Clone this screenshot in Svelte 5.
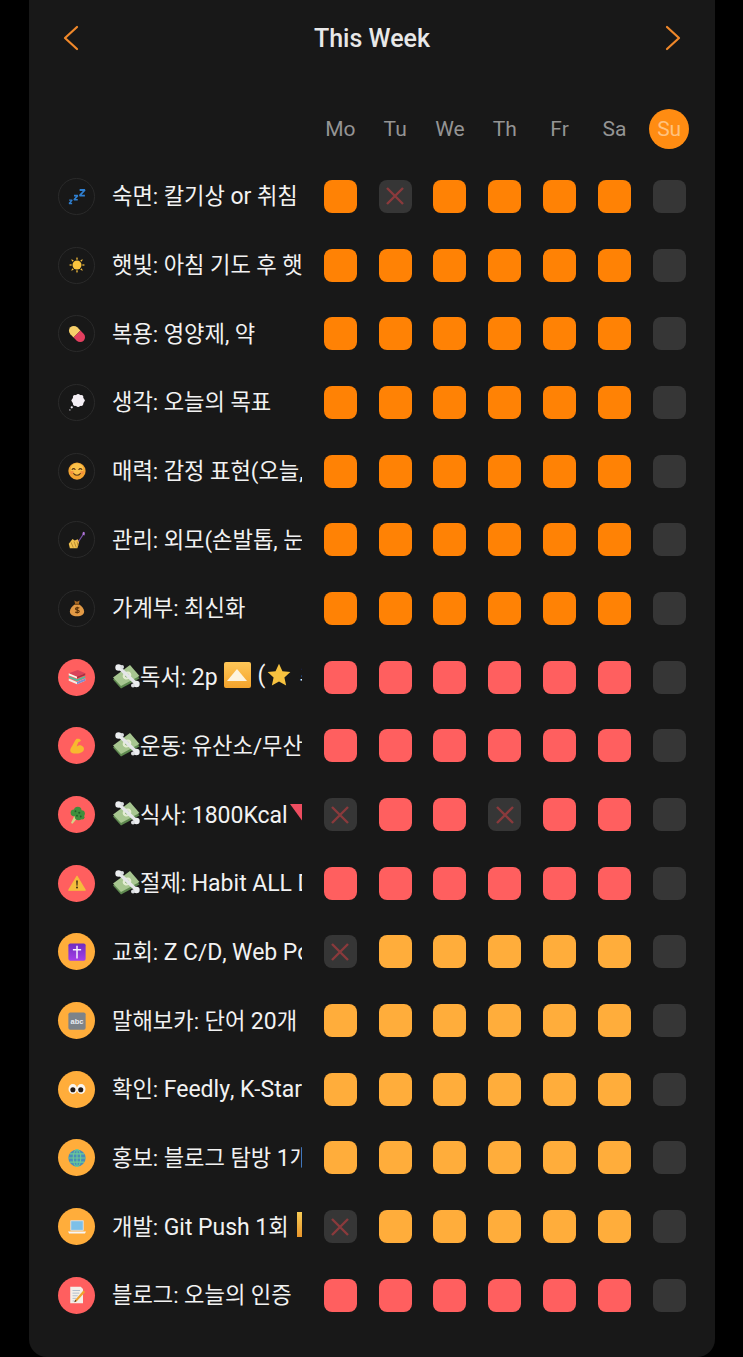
<script>
  const O = 'orange', R = 'red', A = 'amber';
  const days = ['Mo', 'Tu', 'We', 'Th', 'Fr', 'Sa', 'Su'];
  const habits = [
    { icon: 'zzz', text: '숙면: 칼기상 or 취침', tone: O, missed: [1] },
    { icon: 'sun', text: '햇빛: 아침 기도 후 햇빛', tone: O, missed: [] },
    { icon: 'pill', text: '복용: 영양제, 약', tone: O, missed: [] },
    { icon: 'cloud', text: '생각: 오늘의 목표', tone: O, missed: [] },
    { icon: 'smile', text: '매력: 감정 표현(오늘, 감사)', tone: O, missed: [] },
    { icon: 'nails', text: '관리: 외모(손발톱, 눈썹)', tone: O, missed: [] },
    { icon: 'bag', text: '가계부: 최신화', tone: O, missed: [] },
    { icon: 'books', money: true, text: '독서: 2p', after: 'book', tone: R, missed: [] },
    { icon: 'muscle', money: true, text: '운동: 유산소/무산소', tone: R, missed: [] },
    { icon: 'broccoli', money: true, text: '식사: 1800Kcal', after: 'down', tone: R, missed: [0, 3] },
    { icon: 'warn', money: true, text: '절제: Habit ALL Day', tone: R, missed: [] },
    { icon: 'cross', text: '교회: Z C/D, Web Post', tone: A, missed: [0] },
    { icon: 'abc', text: '말해보카: 단어 20개', tone: A, missed: [] },
    { icon: 'eyes', text: '확인: Feedly, K-Star News', tone: A, missed: [] },
    { icon: 'globe', text: '홍보: 블로그 탐방 1개', tone: A, missed: [] },
    { icon: 'laptop', text: '개발: Git Push 1회', after: 'bar', tone: A, missed: [0] },
    { icon: 'memo', text: '블로그: 오늘의 인증', tone: R, missed: [] }
  ];
  // Latin letters and digits run slightly larger than the Hangul beside them.
  const runs = (s) => s.split(/([A-Za-z0-9]+)/);
</script>

{#snippet emoji(name)}
  <svg class="emoji" viewBox="0 0 24 24" aria-hidden="true">
    {#if name === 'zzz'}
      <g fill="none" stroke="#2f7fd0" stroke-linejoin="bevel">
        <path d="M1.500 17.500h4l-4 4.500h4" stroke-width="1.900" />
        <path d="M8 11.500h5l-5 5.500h5" stroke-width="2.100" />
        <path d="M15.500 4h7l-7 7.500h7" stroke-width="2.400" />
      </g>
    {:else if name === 'sun'}
      <g fill="#f0b93c">
        <path d="M12 1l1.400 3.600h-2.800zM12 23l-1.400-3.600h2.800zM1 12l3.600-1.400v2.800zM23 12l-3.600 1.400v-2.800zM4.200 4.200l3.500 1.500-2 2zM19.800 19.800l-3.500-1.500 2-2zM19.800 4.200l-1.500 3.500-2-2zM4.200 19.800l1.500-3.500 2 2z" />
      </g>
      <circle cx="12" cy="12" r="6" fill="#fbc53e" />
    {:else if name === 'pill'}
      <g transform="rotate(45 12 12)">
        <path d="M12 5.500h-6a6.500 6.500 0 0 0 0 13h6z" fill="#f7cf6a" />
        <path d="M12 5.500h6a6.500 6.500 0 0 1 0 13h-6z" fill="#e33f5f" />
      </g>
    {:else if name === 'cloud'}
      <g fill="#f4eff5">
        <circle cx="13.500" cy="10" r="8" />
        <circle cx="13.500" cy="3.800" r="2.400" />
        <circle cx="18" cy="5.200" r="2.400" />
        <circle cx="20" cy="10" r="2.400" />
        <circle cx="18" cy="14.800" r="2.400" />
        <circle cx="13.500" cy="16.200" r="2.400" />
        <circle cx="9" cy="14.800" r="2.400" />
        <circle cx="7" cy="10" r="2.400" />
        <circle cx="9" cy="5.200" r="2.400" />
      </g>
      <circle cx="5" cy="19" r="1.500" fill="#e6e1ea" />
      <circle cx="2.500" cy="22.500" r="0.900" fill="#e6e1ea" />
    {:else if name === 'smile'}
      <circle cx="12" cy="12" r="11.500" fill="#f4a431" />
      <circle cx="12" cy="10" r="8.500" fill="#fbc84f" opacity=".85" />
      <circle cx="5.500" cy="14" r="2.400" fill="#f0803c" opacity=".7" />
      <circle cx="18.500" cy="14" r="2.400" fill="#f0803c" opacity=".7" />
      <g fill="none" stroke="#5a3410" stroke-width="1.400" stroke-linecap="round">
        <path d="M5.500 10c1-1.600 3-1.600 4 0M14.500 10c1-1.600 3-1.600 4 0M7.500 15.500c2.400 3 6.600 3 9 0" />
      </g>
    {:else if name === 'nails'}
      <path d="M1 17l5-6.500 3 2 4-1.500 2 3-2.500 9h-10z" fill="#f2c14e" />
      <path d="M4 15l3 7M8 14l3 8M12 14l1.500 6" stroke="#a87a2a" stroke-width="1" />
      <path d="M14 14L20 5" stroke="#7a4fa8" stroke-width="1.600" />
      <path d="M19 4.500l1-3.500 2.500 1-.5 4z" fill="#b276dc" />
    {:else if name === 'bag'}
      <path d="M8.500 2l3.500 1.500L15.500 2 14.500 7h-5z" fill="#a96a25" />
      <path d="M9.500 7h5c4 2.500 7 6 7 9.500 0 4-3.500 6.500-9.500 6.500S2.500 20.500 2.500 16.500C2.500 13 5.500 9.500 9.500 7z" fill="#e39a45" />
      <rect x="9" y="6.200" width="6" height="1.600" rx=".8" fill="#6e4012" />
      <path d="M15 12.200c-.8-1-4.800-1.200-5 .8-.2 2.400 5.200 1.200 5 3.600-.2 2-4.400 1.800-5.400.6M12.300 10.200v9" fill="none" stroke="#5b3208" stroke-width="1.500" />
    {:else if name === 'books'}
      <path d="M1 7L13 2.500l10 4.500-11 4.500z" fill="#d8435a" />
      <path d="M1 7l11 4.500v2.500L1 9.500z" fill="#fbf6ec" />
      <path d="M12 11.500l11-4.500v2.500L12 14z" fill="#a92f42" />
      <path d="M1 10.500l11 4.500 11-4.500v2.500l-11 4.500L1 13z" fill="#4fbd9c" />
      <path d="M1 14l11 4.500 11-4.500v3l-11 4.500L1 17z" fill="#f2efe6" />
      <path d="M12 18.500l11-4.500v3l-11 4.500z" fill="#7d8ccc" />
    {:else if name === 'muscle'}
      <path d="M11 2.500c2-.8 5 0 6 1.500.5 1.500-1 2.500-3 2.500-1 2-2 4-2.300 6.500 1.500-1.800 4-2.500 6.500-1.500 2.500 1 3.800 3.500 2.800 6-1.300 3-6 4.500-11 4.500-3.500 0-6.500-1-7-3.500-.3-2 1-4 2.500-6.500C7 9.500 8.500 5.500 11 2.500z" fill="#f7b92f" />
    {:else if name === 'broccoli'}
      <path d="M4 22.500l4.500-9.500 3.500 3.500-6 7z" fill="#d6d488" />
      <g fill="#3f8f3d">
        <circle cx="8" cy="9" r="4.500" /><circle cx="13" cy="6" r="5" /><circle cx="18" cy="10" r="4.500" /><circle cx="14" cy="14" r="5" /><circle cx="19" cy="15" r="3" />
      </g>
      <g fill="#1f5c27"><circle cx="10" cy="7" r="1.200" /><circle cx="15" cy="9" r="1.400" /><circle cx="12" cy="13" r="1.200" /><circle cx="17" cy="14" r="1.200" /></g>
    {:else if name === 'warn'}
      <path d="M12 3L23 21.500H1z" fill="#f5bd3c" stroke="#f5bd3c" stroke-width="1.500" stroke-linejoin="round" />
      <path d="M11 8.500h2l-.4 7h-1.200z" fill="#2c2010" />
      <circle cx="12" cy="18" r="1.200" fill="#2c2010" />
    {:else if name === 'cross'}
      <defs>
        <linearGradient id="purple" x1="0" y1="0" x2="0" y2="1">
          <stop offset="0" stop-color="#6d2cc0" />
          <stop offset="1" stop-color="#a63fe8" />
        </linearGradient>
      </defs>
      <rect x="0.500" y="0.500" width="23" height="23" rx="2.500" fill="url(#purple)" />
      <path d="M12 3.500v17M6.500 9h11" stroke="#f8f0fd" stroke-width="2" />
    {:else if name === 'abc'}
      <rect x="0.500" y="0.500" width="23" height="23" rx="2.500" fill="#7d8389" />
      <text x="12" y="15.500" text-anchor="middle" class="abc">abc</text>
    {:else if name === 'eyes'}
      <ellipse cx="6.500" cy="12" rx="5.800" ry="6.800" fill="#f8f5f0" />
      <ellipse cx="17.500" cy="12" rx="5.800" ry="6.800" fill="#f8f5f0" />
      <circle cx="6.500" cy="13" r="3.400" fill="#231a16" />
      <circle cx="17" cy="13" r="3.400" fill="#231a16" />
    {:else if name === 'globe'}
      <circle cx="12" cy="12" r="11.500" fill="#4a8db8" />
      <g fill="none" stroke="#6ccb96" stroke-width="1.400">
        <ellipse cx="12" cy="12" rx="5" ry="11.500" /><path d="M12 .5v23M.5 12h23M2.500 6.500h19M2.500 17.500h19" />
      </g>
    {:else if name === 'laptop'}
      <rect x="3" y="3" width="18" height="14" rx="1" fill="#d9e0e6" />
      <rect x="4.300" y="4.300" width="15.400" height="11.500" fill="#7cc0e8" />
      <path d="M0 18h24l-1.500 2.500h-21z" fill="#f6f6f7" />
    {:else if name === 'memo'}
      <path d="M3 1h14l3 3v19H3z" fill="#f4efe8" />
      <path d="M6 6h10M6 9.500h9M6 13h7M6 16.500h5M6 20h3" stroke="#9fb0c6" stroke-width="1" />
      <path d="M20.500 6l2.500 2L12 20l-3.500 1.500L10 18z" fill="#f0a32f" />
      <path d="M9.500 18.500l2 1.500-3 1.500z" fill="#3c2a18" />
    {/if}
  </svg>
{/snippet}

{#snippet money()}
  <svg class="money" viewBox="0 0 28 25" aria-hidden="true">
    <path d="M1 15.500l8 9L27.500 14.500 18 3z" fill="#5f8a50" />
    <path d="M1 13.500l8 8.500L27.500 12 18 1z" fill="#a7c690" />
    <ellipse cx="15" cy="11.500" rx="4.500" ry="3.800" transform="rotate(-30 15 11.500)" fill="#e4edd2" />
    <circle cx="15" cy="11.500" r="1.900" fill="#5f9350" />
    <path d="M7 3.500L24 19.500" stroke="#e4e6e8" stroke-width="3.400" stroke-linecap="round" />
    <circle cx="6.500" cy="3.500" r="3.200" fill="#eceef0" />
    <circle cx="10" cy="3" r="2" fill="#dcdfe2" />
    <circle cx="24.500" cy="20" r="3.200" fill="#eceef0" />
    <circle cx="21" cy="21.500" r="2" fill="#dcdfe2" />
  </svg>
{/snippet}

{#snippet bookAfter()}
  <span class="up"><span class="tri"></span></span>
  <span class="paren">(</span>
  <svg class="star" viewBox="0 0 24 24" aria-hidden="true"><path d="M12 1.500l3.200 7 7.300.8-5.500 5 1.600 7.400L12 18l-6.600 3.700L7 14.300l-5.500-5 7.300-.8z" fill="#f7c23f" /></svg>
  <span class="more">추가</span>
{/snippet}

<main class="card">
  <header class="top">
    <button class="nav" aria-label="Previous week">
      <svg viewBox="0 0 16 26"><path d="M14 2L2 13l12 11" /></svg>
    </button>
    <h1>This Week</h1>
    <button class="nav" aria-label="Next week">
      <svg viewBox="0 0 16 26"><path d="M2 2l12 11L2 24" /></svg>
    </button>
  </header>

  <div class="row head">
    <div class="label"></div>
    {#each days as d}
      <div class="cell"><span class="day" class:today={d === 'Su'}>{d}</span></div>
    {/each}
  </div>

  {#each habits as h}
    <div class="row">
      <div class="label">
        <span class="badge {h.tone}">{@render emoji(h.icon)}</span>
        <div class="text">
          {#if h.money}{@render money()}{/if}<span>{#each runs(h.text) as run, i}{#if i % 2}<span class="latin">{run}</span>{:else}{run}{/if}{/each}</span>
          {#if h.after === 'book'}{@render bookAfter()}{/if}
          {#if h.after === 'down'}<span class="down"></span>{/if}
          {#if h.after === 'bar'}<span class="bar"></span>{/if}
        </div>
      </div>
      {#each days as d, i}
        <div class="cell">
          {#if i === 6}
            <span class="box"></span>
          {:else if h.missed.includes(i)}
            <span class="box">
              <svg viewBox="0 0 20 20"><path d="M2 2l16 16M18 2L2 18" /></svg>
            </span>
          {:else}
            <span class="box {h.tone}"></span>
          {/if}
        </div>
      {/each}
    </div>
  {/each}
</main>

<style>
  :global(body) {
    margin: 0;
    background: #000;
  }
  .card {
    box-sizing: border-box;
    width: 686px;
    height: 1357px;
    margin-left: 29px;
    background: #181818;
    border-radius: 0 0 18px 18px;
    padding: 0 18px 0 29px;
    font-family: Roboto, "Noto Sans CJK KR", sans-serif;
    color: #fff;
    overflow: hidden;
  }
  .top {
    display: flex;
    align-items: center;
    justify-content: space-between;
    height: 76px;
    padding: 0 16px 0 5px;
  }
  h1 {
    margin: 0;
    font-size: 25px;
    font-weight: 500;
    color: #e8e8e8;
  }
  .nav {
    width: 16px;
    height: 26px;
    padding: 0;
    border: 0;
    background: none;
  }
  .nav svg {
    display: block;
    width: 16px;
    height: 26px;
    fill: none;
    stroke: #f0882a;
    stroke-width: 2.200;
    stroke-linecap: round;
    stroke-linejoin: round;
  }
  .row {
    display: grid;
    grid-template-columns: 255px repeat(7, 54.800px);
    align-items: center;
    height: 68.690px;
  }
  .row.head {
    height: 67px;
    margin-top: 19px;
  }
  .label {
    display: flex;
    align-items: center;
    min-width: 0;
  }
  .badge {
    flex: none;
    display: flex;
    align-items: center;
    justify-content: center;
    box-sizing: border-box;
    width: 37px;
    height: 37px;
    border-radius: 50%;
  }
  .badge.orange {
    border: 1.500px solid #2a2a2a;
  }
  .badge.red {
    background: #ff5f5f;
  }
  .badge.amber {
    background: #ffad3b;
  }
  .emoji {
    width: 18px;
    height: 18px;
    display: block;
  }
  .abc {
    font-size: 10px;
    font-weight: 700;
    fill: #e8ebf2;
    font-family: "Liberation Sans", sans-serif;
  }
  .text {
    display: flex;
    align-items: center;
    box-sizing: border-box;
    width: 190px;
    margin-left: 17px;
    padding-bottom: 4px;
    overflow: hidden;
    white-space: pre;
    font-size: 22.200px;
    color: #f2f2f2;
  }
  .text > * {
    flex: none;
  }
  .latin,
  .paren {
    font-size: 23px;
  }
  .money {
    width: 28px;
    height: 25px;
    margin-top: 2px;
  }
  .up {
    display: flex;
    align-items: center;
    justify-content: center;
    width: 27px;
    height: 26px;
    margin-left: 6px;
    border-radius: 2px;
    background: linear-gradient(#ffc758, #f3a32c);
  }
  .tri {
    width: 0;
    height: 0;
    border-left: 10px solid transparent;
    border-right: 10px solid transparent;
    border-bottom: 12px solid #fdf3de;
  }
  .paren {
    margin-left: 7px;
  }
  .star {
    width: 26px;
    height: 26px;
    margin-left: 1px;
  }
  .more {
    margin-left: 7px;
  }
  .down {
    width: 0;
    height: 0;
    margin-left: 2px;
    border-left: 13px solid transparent;
    border-right: 13px solid transparent;
    border-top: 18px solid #ee4d60;
  }
  .bar {
    width: 26px;
    height: 25px;
    margin-left: 8px;
    background: linear-gradient(#f7cb55, #e9962b);
  }
  .cell {
    display: flex;
    align-items: center;
    justify-content: center;
  }
  .day {
    display: flex;
    align-items: center;
    justify-content: center;
    width: 40px;
    height: 40px;
    border-radius: 50%;
    font-size: 21px;
    color: #949494;
  }
  .day.today {
    background: #ff8c12;
    color: #ffc27e;
  }
  .box {
    display: flex;
    align-items: center;
    justify-content: center;
    width: 33px;
    height: 33px;
    border-radius: 8px;
    background: #363636;
  }
  .box.orange {
    background: #ff8205;
  }
  .box.red {
    background: #ff5f5f;
  }
  .box.amber {
    background: #ffad3b;
  }
  .box svg {
    width: 20px;
    height: 20px;
    fill: none;
    stroke: #8a3a3c;
    stroke-width: 2.400;
  }
</style>
